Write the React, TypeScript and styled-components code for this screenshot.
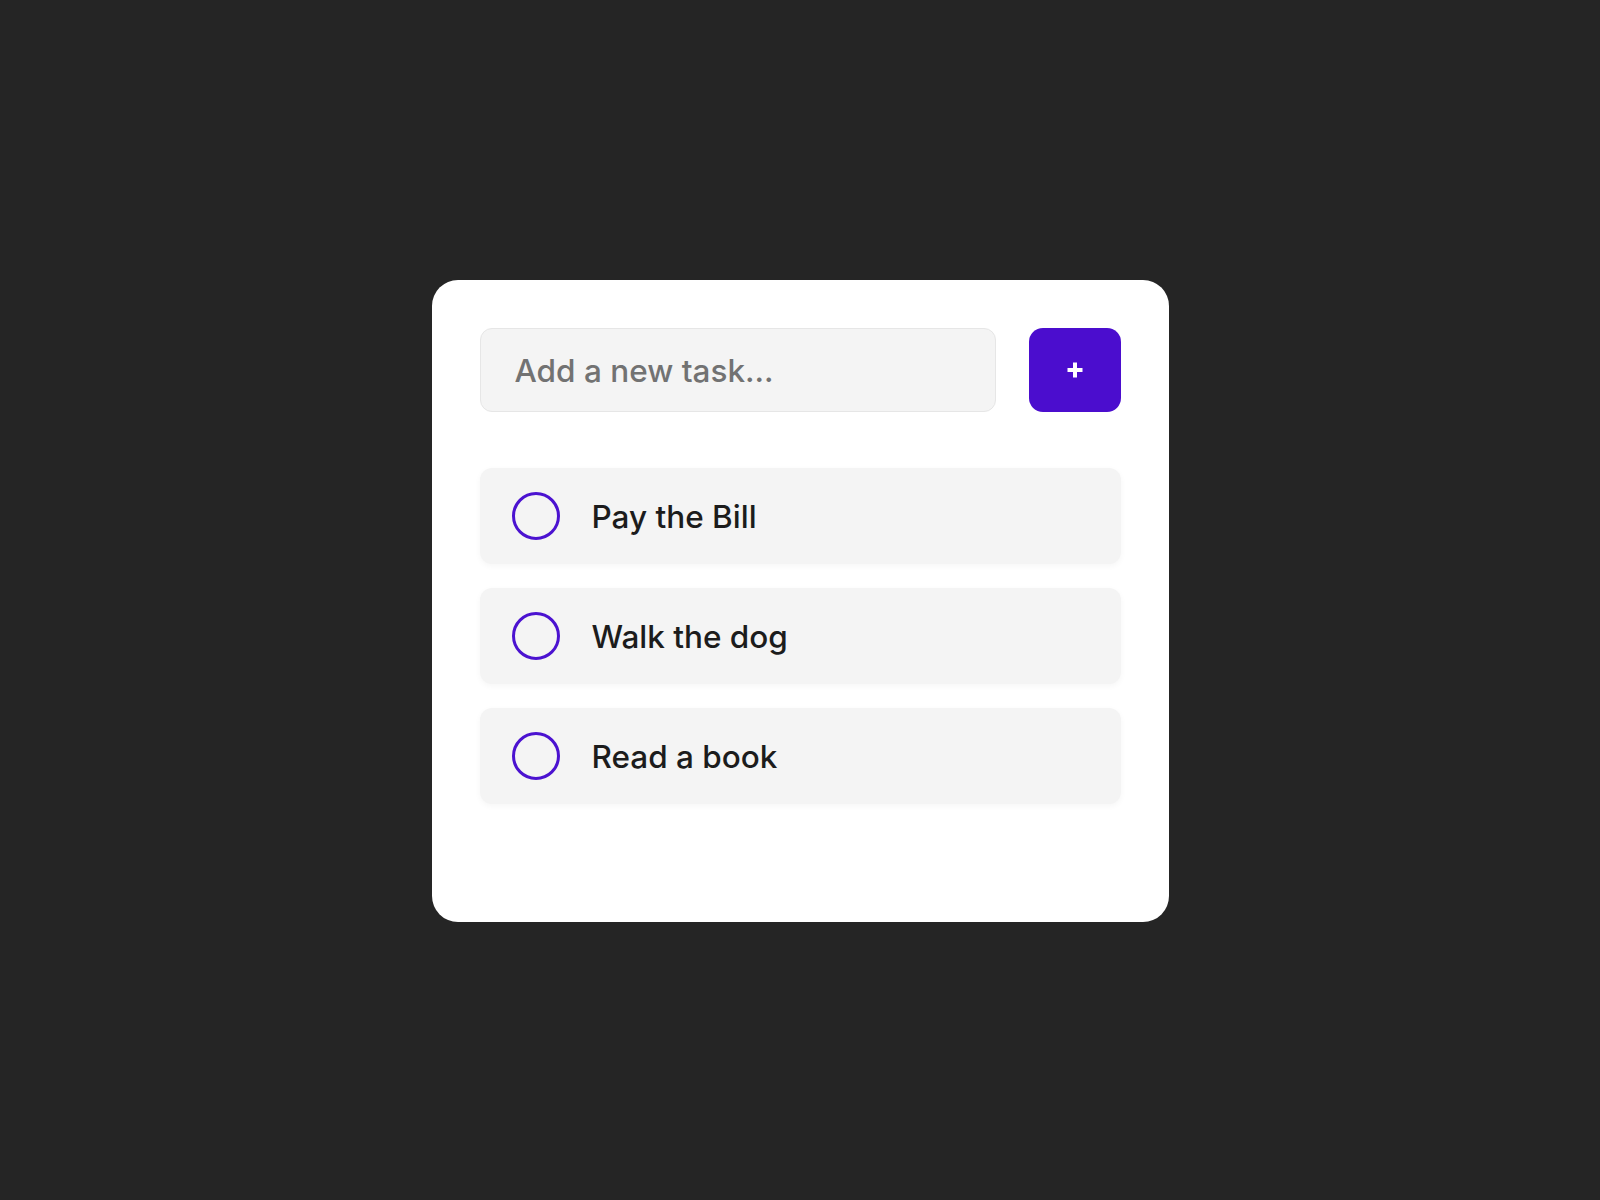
import React, { useState } from 'react';
import styled, { createGlobalStyle } from 'styled-components';

const GlobalStyle = createGlobalStyle`
  html, body {
    margin: 0;
    padding: 0;
    background-color: #252525;
  }
  body {
    font-family: 'Inter', 'Liberation Sans', sans-serif;
  }
`;

const Page = styled.div`
  min-height: 100vh;
  display: flex;
  align-items: center;
  justify-content: center;
  background-color: #252525;
`;

const Card = styled.div`
  box-sizing: border-box;
  width: 737px;
  min-height: 642px;
  margin-top: 2px;
  padding: 48px;
  background-color: #ffffff;
  border-radius: 26px;
`;

const InputRow = styled.form`
  display: flex;
  gap: 33px;
  margin-bottom: 56px;
`;

const TaskInput = styled.input`
  box-sizing: border-box;
  flex: 1;
  min-width: 0;
  height: 84px;
  padding: 0 34px;
  border: 1px solid #e6e6e6;
  border-radius: 12px;
  background-color: #f4f4f4;
  font-family: 'Inter', 'Liberation Sans', sans-serif;
  font-size: 31.5px;
  font-weight: 500;
  color: #222222;
  outline: none;

  &::placeholder {
    color: #727272;
  }
`;

const AddButton = styled.button`
  flex-shrink: 0;
  width: 92px;
  height: 84px;
  border: none;
  border-radius: 14px;
  background-color: #4b0dce;
  color: #ffffff;
  display: flex;
  align-items: center;
  justify-content: center;
  cursor: pointer;
  padding: 0;
`;

const TaskList = styled.ul`
  list-style: none;
  margin: 0;
  padding: 0;
  display: flex;
  flex-direction: column;
  gap: 24px;
`;

const TaskItem = styled.li`
  display: flex;
  align-items: center;
  gap: 32px;
  height: 96px;
  box-sizing: border-box;
  padding: 0 32px;
  background-color: #f4f4f4;
  border-radius: 12px;
  box-shadow: 0 2px 6px rgba(0, 0, 0, 0.04);
`;

const Check = styled.span<{ $done: boolean }>`
  box-sizing: border-box;
  width: 48px;
  height: 48px;
  flex-shrink: 0;
  border-radius: 50%;
  border: 3px solid #4b12d0;
  background-color: ${(p) => (p.$done ? '#4b12d0' : 'transparent')};
  cursor: pointer;
`;

const TaskText = styled.span<{ $done: boolean }>`
  font-size: 31.5px;
  font-weight: 500;
  color: #1c1c1c;
  text-decoration: ${(p) => (p.$done ? 'line-through' : 'none')};
`;

const PlusIcon = () => (
  <svg width='18' height='18' viewBox='0 0 18 18'>
    <path d='M9 1.5v15M1.5 9h15' stroke='#ffffff' strokeWidth='4' />
  </svg>
);

export default function App() {
  const [tasks, setTasks] = useState([
    { text: 'Pay the Bill', done: false },
    { text: 'Walk the dog', done: false },
    { text: 'Read a book', done: false },
  ]);
  const [value, setValue] = useState('');

  const addTask = (e: React.FormEvent) => {
    e.preventDefault();
    if (!value.trim()) return;
    setTasks([...tasks, { text: value.trim(), done: false }]);
    setValue('');
  };

  const toggle = (i: number) =>
    setTasks(tasks.map((t, idx) => (idx === i ? { ...t, done: !t.done } : t)));

  return (
    <Page>
      <GlobalStyle />
      <Card>
        <InputRow onSubmit={addTask}>
          <TaskInput
            placeholder='Add a new task...'
            value={value}
            onChange={(e) => setValue(e.target.value)}
          />
          <AddButton type='submit' aria-label='Add task'>
            <PlusIcon />
          </AddButton>
        </InputRow>
        <TaskList>
          {tasks.map((t, i) => (
            <TaskItem key={i}>
              <Check $done={t.done} onClick={() => toggle(i)} />
              <TaskText $done={t.done}>{t.text}</TaskText>
            </TaskItem>
          ))}
        </TaskList>
      </Card>
    </Page>
  );
}
